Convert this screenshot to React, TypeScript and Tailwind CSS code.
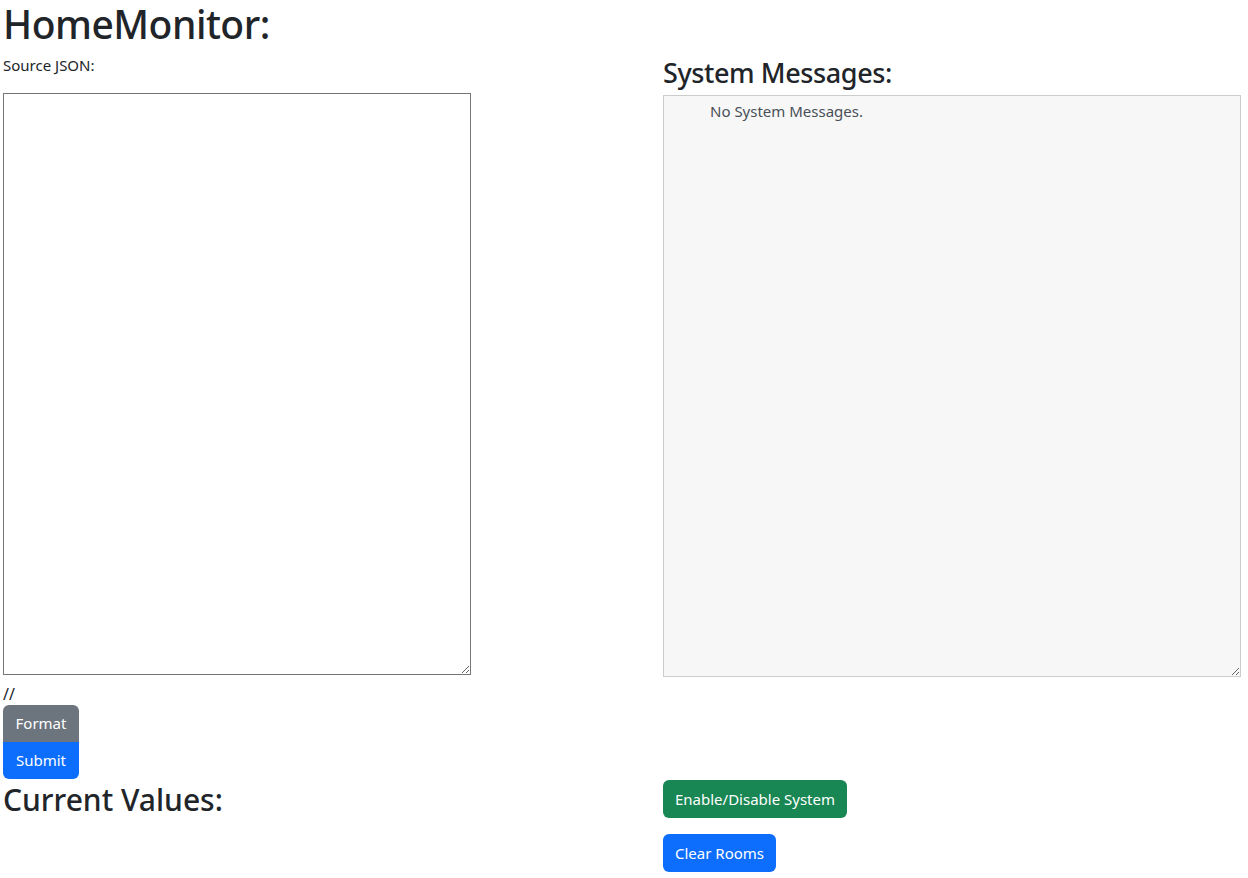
import React from "react";

export default function App() {
  return (
    <div className="w-[1248px] h-[878px] bg-white text-[#212529] overflow-hidden" style={{ fontFamily: '"Noto Sans", "Open Sans", sans-serif' }}>
      <div className="flex">
        <div className="w-[663px] pl-[3px] shrink-0">
          <h1 className="text-[39px] leading-[48px] font-medium m-0 tracking-[-0.5px]">HomeMonitor:</h1>
          <div className="mt-[7px] text-[15px] leading-[21px]">Source JSON:</div>
          <textarea className="block mt-[17px] w-[468px] h-[582px] border border-[#767676] bg-white resize" />
          <div className="mt-[9px] text-[16px] leading-[21px]">//</div>
          <div className="flex flex-col w-[76px]">
            <button className="h-[37px] bg-[#6c757d] text-white text-[15px] rounded-t-[6px]">Format</button>
            <button className="h-[37px] bg-[#0d6efd] text-white text-[15px] rounded-b-[6px]">Submit</button>
          </div>
          <h2 className="text-[30px] leading-[36px] font-medium mt-[3px]">Current Values:</h2>
        </div>
        <div className="w-[578px] pt-[56px]">
          <h3 className="text-[27px] leading-[34px] font-medium tracking-[-0.4px]">System Messages:</h3>
          <div className="mt-[5px] h-[582px] border border-[#cccccc] bg-[#f7f7f7] resize overflow-auto pl-[46px] pt-[3px] text-[15px] leading-[24px] text-[#495057]">
            No System Messages.
          </div>
          <button className="mt-[103px] block h-[38px] px-[12px] bg-[#198754] text-white text-[15px] rounded-[6px]">Enable/Disable System</button>
          <button className="mt-[16px] block h-[38px] px-[12px] bg-[#0d6efd] text-white text-[15px] rounded-[6px]">Clear Rooms</button>
        </div>
      </div>
    </div>
  );
}
